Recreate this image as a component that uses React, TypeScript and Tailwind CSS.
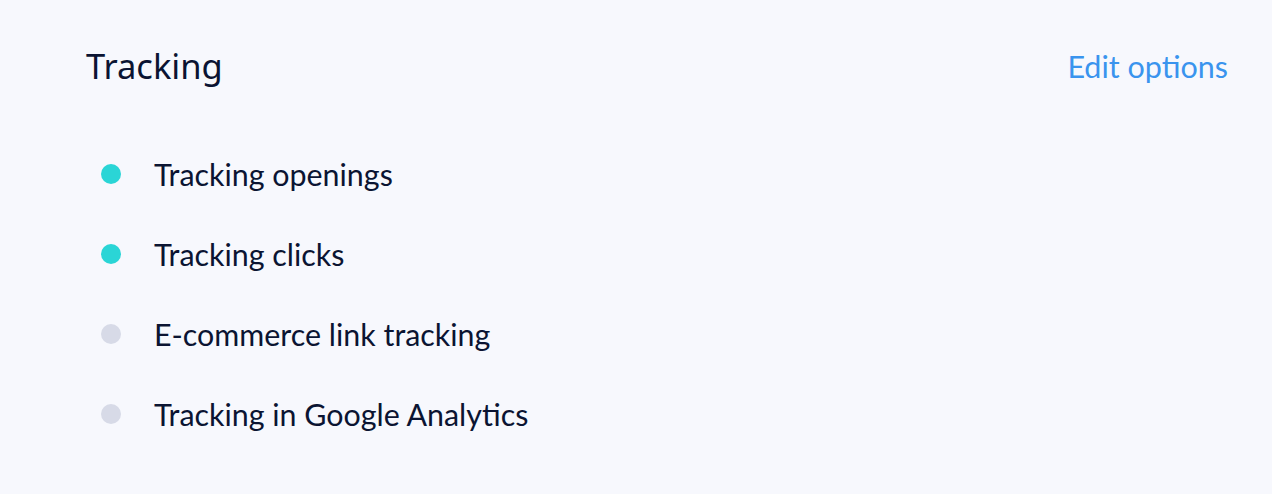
const items = [
  { label: "Tracking openings", on: true },
  { label: "Tracking clicks", on: true },
  { label: "E-commerce link tracking", on: false },
  { label: "Tracking in Google Analytics", on: false },
];

export default function App() {
  return (
    <div className="min-h-[494px] w-full bg-[#f7f8fd] pl-[86px] pr-[44px] pt-[44px] font-['Lato',sans-serif] text-[#0b1432]">
      <div className="flex items-start justify-between">
        <h2 className="font-['Noto_Sans',sans-serif] text-[34.5px] leading-[44px]">Tracking</h2>
        <a href="#" className="text-[30.5px] leading-[44px] text-[#3a94ee]">
          Edit options
        </a>
      </div>
      <ul className="mt-[46px] flex flex-col">
        {items.map((it) => (
          <li key={it.label} className="flex h-[80px] items-center gap-[33px] pl-[15px]">
            <span
              className={
                it.on
                  ? "h-[20px] w-[20px] shrink-0 rounded-full bg-[#2ad5d6]"
                  : "h-[20px] w-[20px] shrink-0 rounded-full bg-[#d7dae7]"
              }
            />
            <span className="text-[30.4px] leading-[40px]">{it.label}</span>
          </li>
        ))}
      </ul>
    </div>
  );
}
